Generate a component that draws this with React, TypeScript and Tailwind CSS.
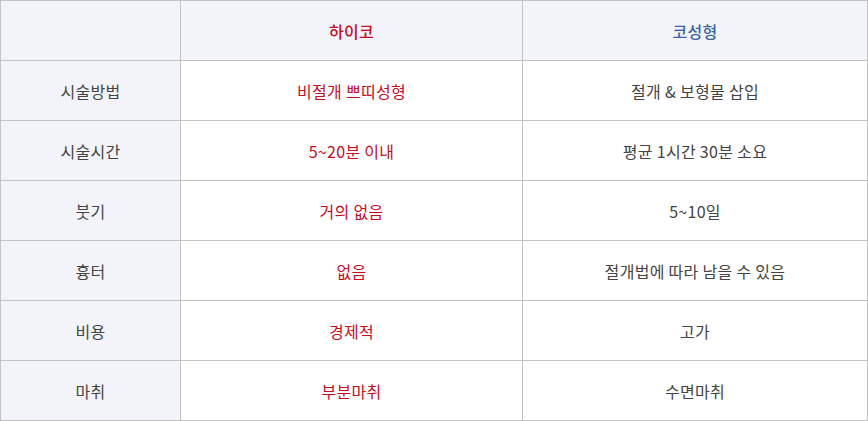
import React from "react";

const rows = [
  ["시술방법", "비절개 쁘띠성형", "절개 & 보형물 삽입"],
  ["시술시간", "5~20분 이내", "평균 1시간 30분 소요"],
  ["붓기", "거의 없음", "5~10일"],
  ["흉터", "없음", "절개법에 따라 남을 수 있음"],
  ["비용", "경제적", "고가"],
  ["마취", "부분마취", "수면마취"],
];

export default function App() {
  return (
    <div
      className="w-[868px] bg-white"
      style={{ fontFamily: '"Noto Sans CJK KR", "Noto Sans", sans-serif' }}
    >
      <div className="grid grid-cols-[179px_341px_344px] auto-rows-[59px] gap-px p-px bg-[#c3c3c3] text-[16px] leading-none tracking-[0.3px]">
        {/* header */}
        <div className="bg-[#f3f4f9]" />
        <div className="bg-[#f3f4f9] flex items-center justify-center font-medium text-[#cc0a1e]">하이코</div>
        <div className="bg-[#f3f4f9] flex items-center justify-center font-medium text-[#3b62a6]">코성형</div>

        {rows.map(([label, hiko, nose]) => (
          <React.Fragment key={label}>
            <div className="bg-[#f3f4f9] flex items-center justify-center text-[#444]">{label}</div>
            <div className="bg-white flex items-center justify-center text-[#cc0a1e]">{hiko}</div>
            <div className="bg-white flex items-center justify-center text-[#444]">{nose}</div>
          </React.Fragment>
        ))}
      </div>
    </div>
  );
}
